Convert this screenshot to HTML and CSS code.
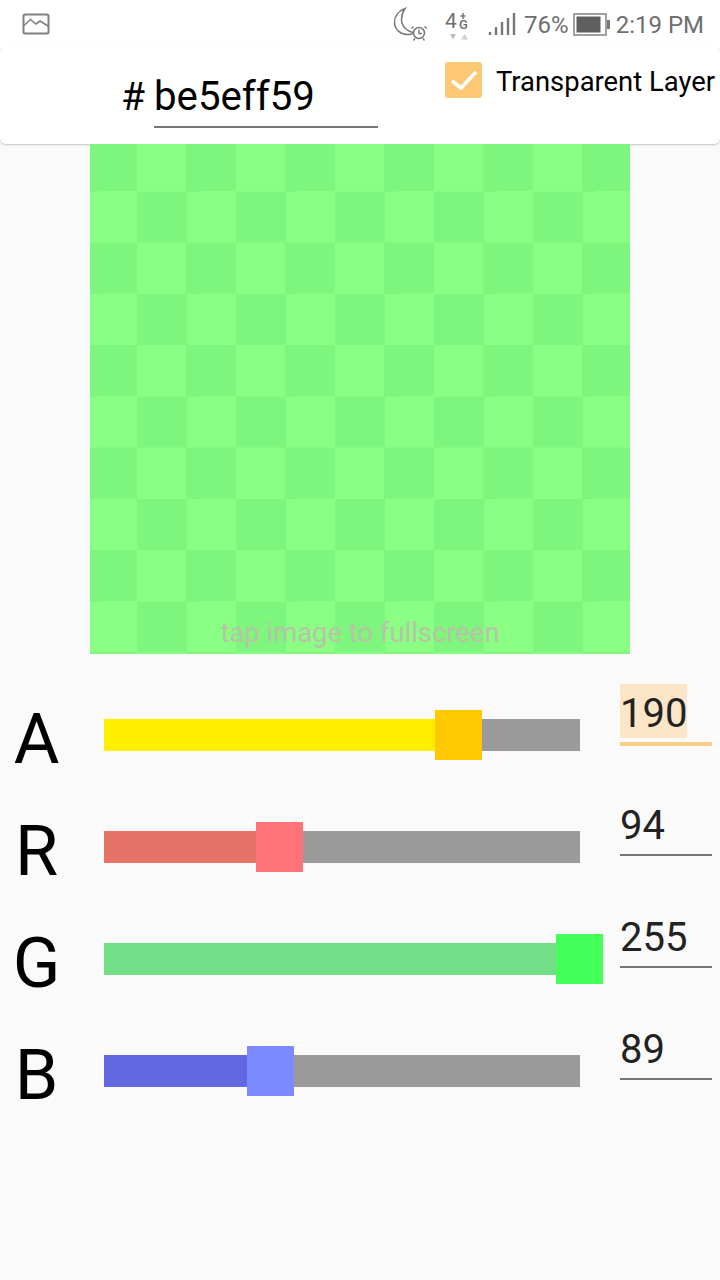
FILE: index.html
```html
<!DOCTYPE html>
<html lang="en">
<head>
<meta charset="utf-8">
<title>Colour picker</title>
<link rel="stylesheet" href="styles.css">
</head>
<body>
<div class="status">
  <svg class="ico-image" viewBox="0 0 28 22" width="28" height="22"><rect x="1.5" y="1.5" width="25" height="19" rx="1.5" fill="none" stroke="#808080" stroke-width="2"/><path d="M2 12.5 L8.5 6.5 L14 11 L18 8 L26 13" fill="none" stroke="#808080" stroke-width="1.6"/></svg>
  <div class="status-right">
    <svg class="ico-moon" viewBox="0 0 36 34" width="36" height="34"><path d="M13 1.500 C6 4 2 10 2.500 16 C3 23 9 28 17 27.500 C20 27.300 21.500 26.500 22.500 25.500 C15 25 9.500 19 9.500 12.500 C9.500 8 11 4.500 13 1.500 Z" fill="none" stroke="#777" stroke-width="1.500"/><circle cx="27" cy="26" r="5.500" fill="#fff" stroke="#777" stroke-width="1.500"/><path d="M27 22.500 V26.500 H30 M21.500 19.500 L19.500 21.500 M32.500 19.500 L34.500 21.500 M23 31.500 L21.500 33.500 M31 31.500 L32.500 33.500" fill="none" stroke="#777" stroke-width="1.400"/></svg>
    <div class="net">
      <div class="net-top"><span class="net-four">4</span><span class="net-g"><svg class="ico-plus" viewBox="0 0 8 8" width="6" height="6"><path d="M4 0 V8 M0.500 4 H7.500" stroke="#777" stroke-width="2"/></svg><span class="net-g-text">G</span></span></div>
      <svg class="ico-arrows" viewBox="0 0 20 6" width="20" height="6"><path d="M0 0 H6 L3 5.500 Z" fill="#bdbdbd"/><path d="M11 5.500 H18 L14.500 0 Z" fill="#cfcfcf"/></svg>
    </div>
    <svg class="ico-signal" viewBox="0 0 28 22" width="28" height="22"><path d="M2 19 V22 M8 14 V22 M14 9 V22 M20 5 V22 M26 0 V22" stroke="#777" stroke-width="2.400" fill="none"/></svg>
    <span class="status-text pct">76%</span>
    <svg class="ico-battery" viewBox="0 0 37 23" width="37" height="23"><rect x="1" y="1" width="32" height="21" fill="none" stroke="#8a8a8a" stroke-width="1.600"/><rect x="3.500" y="3.500" width="24" height="16" fill="#5f5f5f"/><rect x="34" y="7" width="3" height="9" fill="#777"/></svg>
    <span class="status-text time">2:19 PM</span>
  </div>
</div>

<div class="toolbar">
  <div class="hex">
    <span class="hash">#</span>
    <span class="hex-field">be5eff59</span>
  </div>
  <div class="check-wrap">
    <span class="checkbox"><svg viewBox="0 0 36 36" width="36" height="36"><path d="M7 19 L16 26 L31 10" fill="none" stroke="#fff" stroke-width="3.600"/></svg></span>
    <span class="check-label">Transparent Layer</span>
  </div>
</div>

<div class="preview">
  <div class="board"><span class="hint">tap image to fullscreen</span></div>
</div>

<div class="sliders">
  <div class="row">
    <div class="letter">A</div>
    <div class="track"><div class="fill fill-a" style="width:331px"></div><div class="thumb thumb-a"></div></div>
    <div class="value focused"><span class="value-text">190</span></div>
  </div>
  <div class="row">
    <div class="letter">R</div>
    <div class="track"><div class="fill fill-r" style="width:152px"></div><div class="thumb thumb-r"></div></div>
    <div class="value"><span class="value-text">94</span></div>
  </div>
  <div class="row">
    <div class="letter">G</div>
    <div class="track"><div class="fill fill-g" style="width:452px"></div><div class="thumb thumb-g"></div></div>
    <div class="value"><span class="value-text">255</span></div>
  </div>
  <div class="row">
    <div class="letter">B</div>
    <div class="track"><div class="fill fill-b" style="width:143px"></div><div class="thumb thumb-b"></div></div>
    <div class="value"><span class="value-text">89</span></div>
  </div>
</div>
</body>
</html>
```

FILE: styles.css
```css
* { box-sizing: border-box; }
html, body { margin: 0; padding: 0; }
body {
  width: 720px;
  height: 1280px;
  overflow: hidden;
  background: #fafafa;
  font-family: Roboto, "Liberation Sans", sans-serif;
  color: #000;
}

.status {
  height: 48px;
  background: #fff;
  display: flex;
  align-items: center;
  justify-content: space-between;
  padding: 0 16px 0 22px;
}
.ico-image { display: block; }
.status-right { display: flex; align-items: center; }
.ico-moon { display: block; }
.net { width: 28px; margin-left: 17px; display: flex; flex-direction: column; align-items: flex-start; }
.net-top { display: flex; align-items: flex-end; height: 24px; }
.net-four { font-size: 21px; line-height: 24px; color: #6e6e6e; }
.net-g { display: flex; flex-direction: column; align-items: center; margin-left: 2px; margin-bottom: 2px; }
.ico-plus { display: block; margin-bottom: -1px; }
.net-g-text { font-size: 13px; line-height: 13px; font-weight: 500; color: #6e6e6e; }
.ico-arrows { display: block; margin: 1px 0 0 5px; }
.ico-signal { display: block; margin-left: 15px; }
.status-text { font-size: 24px; line-height: 30px; margin-top: 2px; color: #6e6e6e; }
.pct { margin-left: 8px; }
.ico-battery { display: block; margin-left: 4px; }
.time { margin-left: 6px; }

.toolbar {
  height: 96px;
  background: #fff;
  border-radius: 6px;
  box-shadow: 0 1px 2px rgba(0,0,0,.22);
  display: flex;
}
.hex {
  margin-left: 121px;
  width: 257px;
  display: flex;
  align-items: flex-start;
  padding-top: 24px;
}
.hash { font-size: 39px; line-height: 50px; width: 33px; }
.hex-field {
  flex: 1;
  height: 56px;
  font-size: 40.200px;
  line-height: 50px;
  border-bottom: 2px solid #777;
}
.check-wrap {
  margin-left: 67px;
  display: flex;
  align-items: flex-start;
  padding-top: 14px;
}
.checkbox {
  width: 37px;
  height: 36px;
  border-radius: 3px;
  background: #fdc873;
  display: block;
}
.checkbox svg { display: block; }
.check-label { margin-left: 14px; font-size: 27.400px; line-height: 40px; white-space: nowrap; }

.preview { display: flex; justify-content: center; }
.board {
  width: 540px;
  height: 510px;
  position: relative;
  background: repeating-conic-gradient(#7ef57c 0 25%, #8aff84 0 50%) -52px -4px / 99px 102.500px;
}
.hint {
  position: absolute;
  left: 0;
  right: 0;
  bottom: 4px;
  text-align: center;
  font-size: 27.400px;
  line-height: 34px;
  color: #b8c3a8;
}

.sliders { padding-top: 24px; }
.row {
  height: 112px;
  display: flex;
  align-items: flex-start;
}
.letter {
  width: 73px;
  flex: none;
  text-align: center;
  font-size: 70px;
  line-height: 82px;
  margin-top: 20px;
}
.track {
  margin: 41px 0 0 31px;
  width: 476px;
  height: 32px;
  flex: none;
  background: #9a9a9a;
  display: flex;
  align-items: center;
}
.fill { height: 32px; flex: none; }
.thumb { width: 47px; height: 50px; flex: none; }
.fill-a { background: #ffee00; }
.thumb-a { background: #ffc800; }
.fill-r { background: #e57368; }
.thumb-r { background: #ff727a; }
.fill-g { background: #72de88; }
.thumb-g { background: #44ff55; }
.fill-b { background: #6269e0; }
.thumb-b { background: #7b8aff; }

.value {
  margin: 6px 0 0 40px;
  width: 92px;
  flex: none;
  height: 60px;
  border-bottom: 2px solid #777;
}
.value.focused { height: 62px; border-bottom: 4px solid #f9cd88; }
.value-text {
  display: inline-block;
  height: 54px;
  padding-top: 3px;
  font-size: 40px;
  line-height: 54px;
  color: #222;
}
.focused .value-text { background: #fde6c8; }
```
